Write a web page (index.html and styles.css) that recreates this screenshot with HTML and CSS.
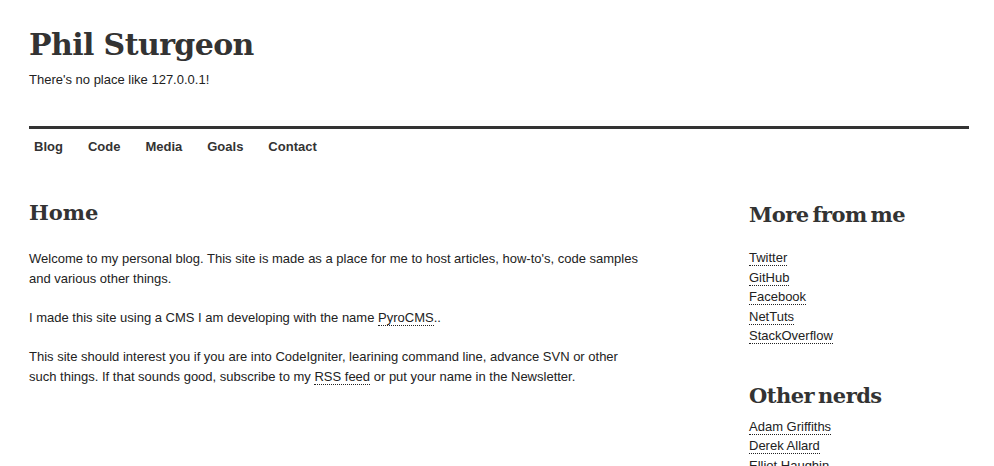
FILE: index.html
```html
<!DOCTYPE html>
<html>
<head>
<meta charset="utf-8">
<title>Phil Sturgeon</title>
<link rel="stylesheet" href="styles.css">
</head>
<body>
<div class="page">
  <header class="header">
    <h1 class="site-title">Phil Sturgeon</h1>
    <p class="tagline">There's no place like 127.0.0.1!</p>
  </header>
  <nav class="nav">
    <a href="#">Blog</a>
    <a href="#">Code</a>
    <a href="#">Media</a>
    <a href="#">Goals</a>
    <a href="#">Contact</a>
  </nav>
  <div class="columns">
    <main class="main">
      <h2 class="page-title">Home</h2>
      <p>Welcome to my personal blog. This site is made as a place for me to host articles, how-to's, code samples and various other things.</p>
      <p>I made this site using a CMS I am developing with the name <a class="dotted" href="#">PyroCMS</a>..</p>
      <p>This site should interest you if you are into CodeIgniter, learining command line, advance SVN or other such things. If that sounds good, subscribe to my <a class="dotted" href="#">RSS feed</a> or put your name in the Newsletter.</p>
    </main>
    <aside class="sidebar">
      <h3 class="widget-title">More from me</h3>
      <ul class="links">
        <li><a class="dotted" href="#">Twitter</a></li>
        <li><a class="dotted" href="#">GitHub</a></li>
        <li><a class="dotted" href="#">Facebook</a></li>
        <li><a class="dotted" href="#">NetTuts</a></li>
        <li><a class="dotted" href="#">StackOverflow</a></li>
      </ul>
      <h3 class="widget-title second">Other nerds</h3>
      <ul class="links">
        <li><a class="dotted" href="#">Adam Griffiths</a></li>
        <li><a class="dotted" href="#">Derek Allard</a></li>
        <li><a class="dotted" href="#">Elliot Haughin</a></li>
      </ul>
    </aside>
  </div>
</div>
</body>
</html>
```

FILE: styles.css
```css
html, body {
  margin: 0;
  padding: 0;
  background: #fff;
}
body {
  font-family: "Liberation Sans", Arial, sans-serif;
  font-size: 13px;
  color: #222;
}
.page {
  width: 940px;
  margin: 0 0 0 29px;
}
.header {
  padding-top: 25px;
  height: 126px;
  box-sizing: border-box;
}
.site-title {
  font-family: "DejaVu Serif", Georgia, serif;
  font-size: 30px;
  font-weight: bold;
  color: #333;
  margin: 0;
  line-height: 40px;
  letter-spacing: -0.6px;
}
.tagline {
  margin: 6px 0 0;
  line-height: 18px;
}
.nav {
  border-top: 3px solid #333;
  display: flex;
  padding: 8px 0 0 5px;
  height: 30px;
}
.nav a {
  font-weight: bold;
  color: #333;
  text-decoration: none;
  line-height: 20px;
  margin-right: 25px;
}
.columns {
  display: flex;
  justify-content: space-between;
  margin-top: 29px;
}
.main {
  width: 616px;
}
.page-title, .widget-title {
  font-family: "DejaVu Serif", Georgia, serif;
  font-weight: bold;
  color: #333;
  margin: 0;
  font-size: 21px;
  line-height: 30px;
  padding-top: 2px;
  letter-spacing: -0.5px;
  word-spacing: -3px;
}
.page-title {
  letter-spacing: 0;
}
.main p {
  margin: 19px 0 0;
  line-height: 20px;
}
.main .page-title + p {
  margin-top: 21px;
}
.sidebar {
  width: 220px;
  padding-top: 2px;
}
.widget-title {
  margin-bottom: 18px;
}
.widget-title.second {
  margin-top: 33px;
  margin-bottom: 6px;
}
.links {
  list-style: none;
  margin: 0;
  padding: 0;
}
.links li {
  line-height: 19.5px;
}
a {
  color: #222;
}
a.dotted {
  text-decoration: none;
  border-bottom: 1px dotted #222;
}
```
